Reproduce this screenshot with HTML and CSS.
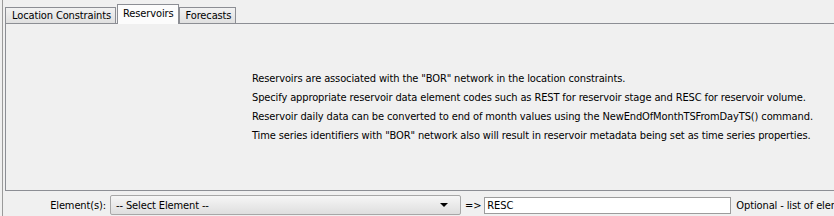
FILE: index.html
```html
<!DOCTYPE html>
<html lang="en">
<head>
  <meta charset="UTF-8" />
  <title>Reservoirs</title>
  <link rel="stylesheet" href="styles.css">
</head>
<body>
  <div class="frame">
    <div class="tabs">
      <div class="tab">Location Constraints</div>
      <div class="tab active">Reservoirs</div>
      <div class="tab">Forecasts</div>
    </div>
    <div class="panel">
      <div class="notes">
        <p>Reservoirs are associated with the "BOR" network in the location constraints.</p>
        <p>Specify appropriate reservoir data element codes such as REST for reservoir stage and RESC for reservoir volume.</p>
        <p>Reservoir daily data can be converted to end of month values using the NewEndOfMonthTSFromDayTS() command.</p>
        <p>Time series identifiers with "BOR" network also will result in reservoir metadata being set as time series properties.</p>
      </div>
    </div>
    <div class="form-row">
      <label class="field-label">Element(s):</label>
      <div class="combo">
        <span>-- Select Element --</span>
        <span class="arrow"></span>
      </div>
      <span class="arrow-text">=&gt;</span>
      <input type="text" class="text-field" value="RESC" />
      <span class="hint">Optional - list of elements</span>
    </div>
  </div>
</body>
</html>
```

FILE: styles.css
```css
* {
  box-sizing: border-box;
  margin: 0;
  padding: 0;
}

body {
  background-color: #f0f0f0;
  font-family: "DejaVu Sans Condensed", "DejaVu Sans", sans-serif;
  font-stretch: condensed;
  font-size: 11px;
  letter-spacing: -0.12px;
  color: #000;
  width: 834px;
  height: 216px;
  overflow: hidden;
  padding-left: 2px;
}

.frame {
  border-left: 1px solid #9a9a9a;
  height: 216px;
  padding-left: 2px;
  white-space: nowrap;
}

.tabs {
  display: flex;
  align-items: flex-end;
  height: 23px;
  padding-top: 3px;
}

.tab {
  height: 16px;
  padding: 0 4px 0 6px;
  line-height: 15px;
  background: linear-gradient(#f2f2f2, #e0e0e0);
  border: 1px solid #8c8e94;
  border-bottom: none;
  margin-right: 1px;
}

.tab.active {
  height: 20px;
  line-height: 17px;
  background: #fcfcfc;
  padding: 0 4px 0 5px;
  margin-right: 0;
  position: relative;
  top: 1px;
  border-color: #8c8e94;
}

.panel {
  height: 168px;
  border-top: 1px solid #8c8e94;
  border-left: 1px solid #8c8e94;
  border-bottom: 1px solid #8c8e94;
  display: flex;
  align-items: center;
  padding-left: 246px;
}

.notes p {
  line-height: 19px;
}

.form-row {
  display: flex;
  align-items: center;
  height: 25px;
  padding-top: 3px;
}

.form-row > * {
  flex-shrink: 0;
}

.field-label {
  width: 101px;
  text-align: right;
  margin-right: 4px;
}

.combo {
  width: 351px;
  height: 20px;
  border: 1px solid #a7a7a7;
  border-radius: 2px;
  background: linear-gradient(#f6f6f6, #dedede);
  display: flex;
  align-items: center;
  justify-content: space-between;
  padding: 0 12px 0 5px;
}

.arrow {
  width: 0;
  height: 0;
  border-left: 4px solid transparent;
  border-right: 4px solid transparent;
  border-top: 4px solid #000;
}

.arrow-text {
  margin: 0 3px 0 4px;
}

.text-field {
  width: 247px;
  height: 17px;
  border: 1px solid #9c9c9c;
  background: #fff;
  font: inherit;
  font-stretch: condensed;
  letter-spacing: -0.12px;
  padding: 0 2px;
  margin-right: 5px;
}
```
